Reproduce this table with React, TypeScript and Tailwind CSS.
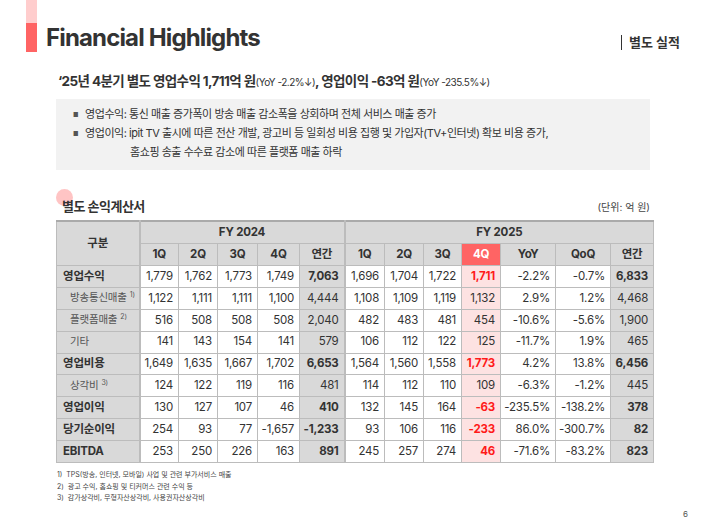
import React from 'react';

const font = { fontFamily: 'Inter, "Noto Sans CJK KR", sans-serif' };

type Row = {
  label: string;
  sup?: string;
  sub?: boolean;
  bold?: boolean;
  y24: string[];
  y25: string[];
  hi?: boolean;
};

const rows: Row[] = [
  { label: '영업수익', bold: true, y24: ['1,779', '1,762', '1,773', '1,749', '7,063'], y25: ['1,696', '1,704', '1,722', '1,711', '-2.2%', '-0.7%', '6,833'], hi: true },
  { label: '방송통신매출', sup: '1)', sub: true, y24: ['1,122', '1,111', '1,111', '1,100', '4,444'], y25: ['1,108', '1,109', '1,119', '1,132', '2.9%', '1.2%', '4,468'] },
  { label: '플랫폼매출', sup: '2)', sub: true, y24: ['516', '508', '508', '508', '2,040'], y25: ['482', '483', '481', '454', '-10.6%', '-5.6%', '1,900'] },
  { label: '기타', sub: true, y24: ['141', '143', '154', '141', '579'], y25: ['106', '112', '122', '125', '-11.7%', '1.9%', '465'] },
  { label: '영업비용', bold: true, y24: ['1,649', '1,635', '1,667', '1,702', '6,653'], y25: ['1,564', '1,560', '1,558', '1,773', '4.2%', '13.8%', '6,456'], hi: true },
  { label: '상각비', sup: '3)', sub: true, y24: ['124', '122', '119', '116', '481'], y25: ['114', '112', '110', '109', '-6.3%', '-1.2%', '445'] },
  { label: '영업이익', bold: true, y24: ['130', '127', '107', '46', '410'], y25: ['132', '145', '164', '-63', '-235.5%', '-138.2%', '378'], hi: true },
  { label: '당기순이익', bold: true, y24: ['254', '93', '77', '-1,657', '-1,233'], y25: ['93', '106', '116', '-233', '86.0%', '-300.7%', '82'], hi: true },
  { label: 'EBITDA', bold: true, y24: ['253', '250', '226', '163', '891'], y25: ['245', '257', '274', '46', '-71.6%', '-83.2%', '823'], hi: true },
];

const widths = [83, 39, 39, 40, 42, 45, 40, 39, 38, 39, 55, 55, 43];

const cell = 'border border-[#bcbcbc] text-right pr-[5px]';

export default function App() {
  return (
    <div className="relative w-[706px] h-[530px] bg-white text-[#333] overflow-hidden" style={font}>
      {/* header bar */}
      <div className="flex items-start">
        <div className="ml-[26px] flex flex-col w-[11px]">
          <div className="h-[23px] bg-[#ffcdcd]" />
          <div className="h-[29px] bg-[#ff6464]" />
        </div>
        <h1 className="ml-[9px] mt-[24px] text-[24px] leading-[28px] font-bold tracking-[-0.85px] text-[#333]">
          Financial Highlights
        </h1>
        <div className="ml-auto mr-[26px] mt-[33px] flex items-center text-[13px] font-bold">
          <span className="w-px h-[15px] bg-[#333] mr-[7px]" />
          별도 실적
        </div>
      </div>

      {/* headline */}
      <div className="ml-[58px] mt-[19px] text-[13.5px] leading-[18px] font-bold tracking-[-0.6px]">
        ‘25년 4분기 별도 영업수익 1,711억 원
        <span className="text-[10px] font-normal tracking-[-0.5px]">(YoY -2.2%↓)</span>, 영업이익 -63억 원
        <span className="text-[10px] font-normal tracking-[-0.5px]">(YoY -235.5%↓)</span>
      </div>

      {/* summary box */}
      <div className="mx-[56px] mt-[8px] h-[71px] bg-[#f2f2f2] pl-[17px] pt-[6px] text-[11px] leading-[19px] tracking-[-0.45px]">
        <div className="flex">
          <span className="text-[6px] mr-[7px] text-[#555]">■</span>
          <span>영업수익: 통신 매출 증가폭이 방송 매출 감소폭을 상회하며 전체 서비스 매출 증가</span>
        </div>
        <div className="flex">
          <span className="text-[6px] mr-[7px] text-[#555]">■</span>
          <span>
            영업이익: ipit TV 출시에 따른 전산 개발, 광고비 등 일회성 비용 집행 및 가입자(TV+인터넷) 확보 비용 증가,
            <br />
            <span className="ml-[45px]">홈쇼핑 송출 수수료 감소에 따른 플랫폼 매출 하락</span>
          </span>
        </div>
      </div>

      {/* section title */}
      <div className="mx-[56px] mt-[28px] flex items-end justify-between">
        <div className="relative pl-[6px] text-[13px] font-bold tracking-[-0.5px] leading-[16px]">
          <span className="absolute left-0 -top-[9px] w-[17px] h-[17px] rounded-full bg-[#ff9d9d] opacity-60" />
          <span className="relative">별도 손익계산서</span>
        </div>
        <div className="text-[10px] text-[#444] leading-[14px]">(단위: 억 원)</div>
      </div>

      {/* table */}
      <table className="ml-[56px] mt-[6px] table-fixed border-collapse text-[11.5px] tracking-[-0.2px]" style={{ width: 597 }}>
        <colgroup>
          {widths.map((w, i) => (
            <col key={i} style={{ width: w }} />
          ))}
        </colgroup>
        <thead>
          <tr className="h-[23px] bg-[#d9d9d9] font-bold">
            <th rowSpan={2} className="border border-[#bcbcbc] border-r-2 border-t-2 border-t-[#aaa] text-center font-bold">구분</th>
            <th colSpan={5} className="border border-[#bcbcbc] border-t-2 border-t-[#aaa] border-r-2 text-center">FY 2024</th>
            <th colSpan={7} className="border border-[#bcbcbc] border-t-2 border-t-[#aaa] text-center">FY 2025</th>
          </tr>
          <tr className="h-[22px] bg-[#d9d9d9]">
            {['1Q', '2Q', '3Q', '4Q', '연간', '1Q', '2Q', '3Q', '4Q', 'YoY', 'QoQ', '연간'].map((h, i) => (
              <th
                key={i}
                className={`border border-[#bcbcbc] text-center font-bold ${i === 4 ? 'border-r-2' : ''} ${
                  i === 8 ? 'bg-[#ff6464] text-white' : ''
                }`}
              >
                {h}
              </th>
            ))}
          </tr>
        </thead>
        <tbody>
          {rows.map((r, ri) => (
            <tr key={ri} className="h-[21.9px]">
              <td
                className={`border border-[#bcbcbc] border-r-2 bg-[#d9d9d9] text-left ${
                  r.sub ? 'pl-[13px] text-[#555] text-[10.5px]' : 'pl-[6px] font-bold'
                }`}
              >
                {r.label}
                {r.sup && <sup className="ml-[3px] text-[7px] top-[-0.6em]">{r.sup}</sup>}
              </td>
              {r.y24.map((v, i) => (
                <td
                  key={i}
                  className={`${cell} ${i === 4 ? 'bg-[#d9d9d9] border-r-2' : 'bg-white'} ${
                    i === 4 && r.bold ? 'font-bold' : ''
                  }`}
                >
                  {v}
                </td>
              ))}
              {r.y25.map((v, i) => (
                <td
                  key={i}
                  className={`${cell} ${
                    i === 3 ? 'bg-[#fde2e2]' : i === 6 ? 'bg-[#d9d9d9]' : 'bg-white'
                  } ${i === 3 && r.hi ? 'font-bold text-[#ff1a1a]' : ''} ${i === 6 && r.bold ? 'font-bold' : ''}`}
                >
                  {v}
                </td>
              ))}
            </tr>
          ))}
        </tbody>
      </table>

      {/* footnotes */}
      <div className="ml-[57px] mt-[6px] text-[7px] leading-[11.5px] text-[#444]">
        <div>1)&nbsp; TPS(방송, 인터넷, 모바일) 사업 및 관련 부가서비스 매출</div>
        <div>2)&nbsp; 광고 수익, 홈쇼핑 및 티커머스 관련 수익 등</div>
        <div>3)&nbsp; 감가상각비, 무형자산상각비, 사용권자산상각비</div>
      </div>

      <div className="absolute right-[18px] bottom-[10px] text-[8px] text-[#555]">6</div>
    </div>
  );
}
